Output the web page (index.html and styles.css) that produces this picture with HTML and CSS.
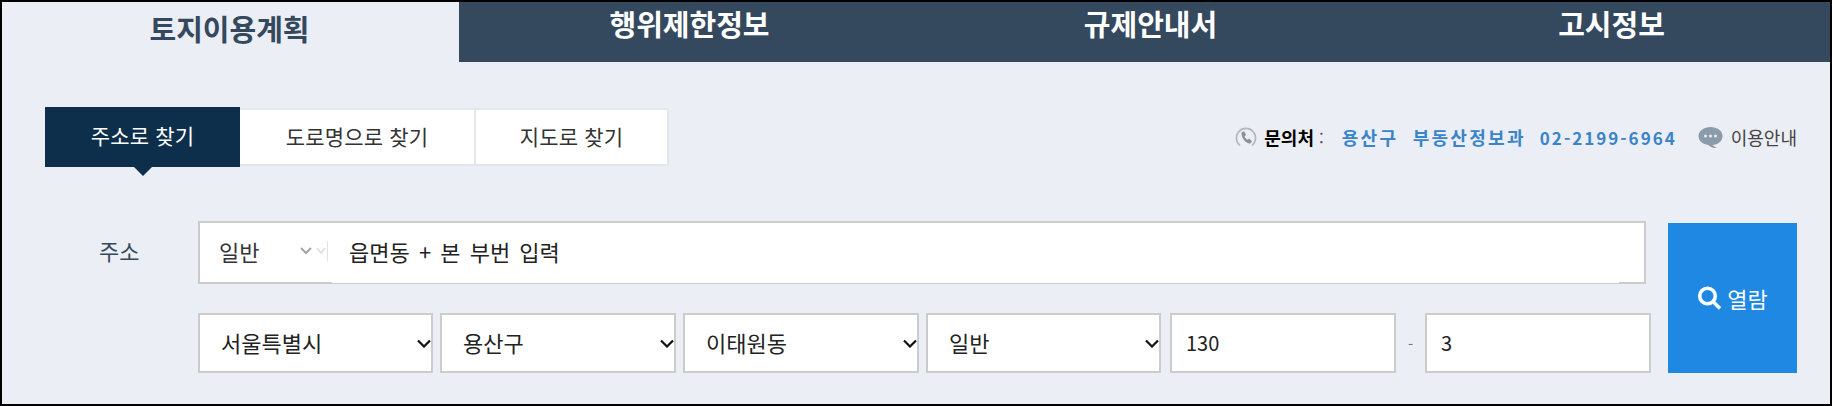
FILE: index.html
```html
<!DOCTYPE html>
<html lang="ko">
<head>
    <meta charset="UTF-8">
    <title>토지이용계획</title>
    <link rel="stylesheet" href="styles.css">
</head>
<body>
    <div class="page">
        <div class="main-tabs">
            <a class="main-tab active">토지이용계획</a>
            <a class="main-tab">행위제한정보</a>
            <a class="main-tab">규제안내서</a>
            <a class="main-tab">고시정보</a>
        </div>

        <div class="search-head">
            <div class="sub-tabs">
                <a class="sub-tab active">주소로 찾기</a>
                <a class="sub-tab road">도로명으로 찾기</a>
                <a class="sub-tab">지도로 찾기</a>
            </div>
            <div class="contact">
                <svg class="phone-icon" width="22" height="20" viewBox="0 0 22 20">
                    <path d="M5 18.5A9.6 9.6 0 1 1 17 18.5" fill="none" stroke="#b3b6ba" stroke-width="1.6"/>
                    <path d="M6.5 5.5l2.6-1.3 2 3.7-1.6 1.3c.5 1.5 1.5 2.7 3 3.5l1.6-1.2 3 3-1.8 2.1c-4.700 .2-9-5.700-8.800-11.100z" fill="#8d9196"/>
                </svg>
                <b class="contact-label">문의처</b>
                <span class="colon">:</span>
                <span class="contact-dept">용산구 부동산정보과</span>
                <span class="contact-tel">02-2199-6964</span>
                <svg class="talk-icon" width="25" height="23" viewBox="0 0 25 23">
                    <path d="M12.500 1C19 1 24.500 4.600 24.500 10S19.500 19 14.500 19c1.500 1.500 3 2.300 4.500 3-3.300 .3-6.500-.9-8.700-3.100C5 18.500 .5 15 .5 10S6 1 12.500 1z" fill="#8b9baa"/>
                    <circle cx="7.500" cy="10" r="1.500" fill="#e8ecf0"/>
                    <circle cx="12.500" cy="10" r="1.500" fill="#e8ecf0"/>
                    <circle cx="17.500" cy="10" r="1.500" fill="#e8ecf0"/>
                </svg>
                <a class="guide">이용안내</a>
            </div>
        </div>

        <div class="search-form">
            <div class="fields">
                <div class="addr-row">
                    <label class="addr-label">주소</label>
                    <div class="addr-box">
                        <select class="addr-type">
                            <option>일반</option>
                        </select>
                        <svg class="addr-arrows" width="28" height="22" viewBox="0 0 28 22">
                            <path d="M1 7l5 5 5-5" fill="none" stroke="#a6a6a6" stroke-width="2"/>
                            <path d="M17 7l4 5 4-5" fill="none" stroke="#dcdcdc" stroke-width="1.500"/>
                            <path d="M27.500 0v20" fill="none" stroke="#e2e2e2"/>
                        </svg>
                        <input class="addr-input" type="text" value="읍면동 + 본 부번 입력">
                    </div>
                </div>
                <div class="parcel-row">
                    <select class="parcel-select"><option>서울특별시</option></select>
                    <select class="parcel-select wide"><option>용산구</option></select>
                    <select class="parcel-select wide"><option>이태원동</option></select>
                    <select class="parcel-select"><option>일반</option></select>
                    <input class="parcel-num first" type="text" value="130">
                    <span class="dash">-</span>
                    <input class="parcel-num" type="text" value="3">
                </div>
            </div>
            <button class="view-button">
                <svg width="25" height="24" viewBox="0 0 25 24">
                    <circle cx="10.500" cy="10" r="7.800" fill="none" stroke="#fff" stroke-width="3.600"/>
                    <path d="M16.500 16l6.500 6.500" stroke="#fff" stroke-width="3.600"/>
                </svg>
                <span>열람</span>
            </button>
        </div>
    </div>
</body>
</html>
```

FILE: styles.css
```css
* {
    box-sizing: border-box;
}

body {
    margin: 0;
    font-family: "Noto Sans CJK KR", "Noto Sans", sans-serif;
}

.page {
    width: 1832px;
    height: 406px;
    border: 2px solid #000;
    background: #ebeef4;
    overflow: hidden;
}

.main-tabs {
    display: flex;
    height: 60px;
}

.main-tab {
    flex: none;
    width: 461px;
    background: #34495e;
    color: #fff;
    font-size: 29px;
    font-weight: bold;
    line-height: 42px;
    text-align: center;
}

.main-tab.active {
    width: 457px;
    padding-right: 2px;
    background: transparent;
    color: #34495e;
    line-height: 52px;
}

.search-head {
    display: flex;
    justify-content: space-between;
    align-items: center;
    height: 60px;
    margin-top: 45px;
    padding: 0 33px 0 43px;
}

.sub-tabs {
    display: flex;
    align-items: flex-start;
}

.sub-tab {
    width: 195px;
    height: 58px;
    margin-top: 1px;
    border: 2px solid #e3e6ea;
    background: #fff;
    color: #333;
    font-size: 21px;
    letter-spacing: .2px;
    line-height: 52px;
    text-align: center;
}

.sub-tab.road {
    width: 234px;
    border-left: 0;
    border-right: 0;
}

.sub-tab.active {
    position: relative;
    height: 60px;
    margin-top: 0;
    border: 0;
    background: #0e2f4b;
    color: #fff;
    line-height: 57px;
}

.sub-tab.active::after {
    content: "";
    position: absolute;
    left: 89px;
    top: 60px;
    border: 9px solid transparent;
    border-top-color: #0e2f4b;
    border-bottom: 0;
}

.contact {
    display: flex;
    align-items: center;
    height: 30px;
    font-size: 17px;
    white-space: nowrap;
}

.phone-icon {
    margin-right: 7px;
}

.contact-label {
    color: #000;
    font-size: 18px;
}

.colon {
    margin: 0 18px 0 5px;
    color: #555;
}

.contact-dept,
.contact-tel {
    color: #3a84c9;
    font-weight: bold;
    letter-spacing: 2px;
}

.contact-dept {
    margin-right: 14px;
    font-size: 18px;
    letter-spacing: 2.3px;
    word-spacing: 7px;
}

.contact-tel {
    margin-right: 21px;
}

.talk-icon {
    margin-right: 8px;
}

.guide {
    color: #444;
    font-size: 18px;
}

.search-form {
    display: flex;
    gap: 17px;
    margin-top: 54px;
    padding-left: 43px;
}

.fields {
    width: 1606px;
}

.addr-row {
    display: flex;
    align-items: center;
    height: 63px;
}

.addr-label {
    width: 153px;
    padding: 0 0 6px 54px;
    color: #34495e;
    font-size: 22px;
}

.addr-box {
    display: flex;
    align-items: center;
    width: 1448px;
    height: 63px;
    border: 2px solid #ccc;
    background: #fff;
}

.addr-type {
    appearance: none;
    width: 100px;
    height: 100%;
    padding: 0 0 4px 19px;
    border: 0;
    background: transparent;
    color: #333;
    font-family: inherit;
    font-size: 22px;
}

.addr-arrows {
    flex: none;
    margin: 0 4px 2px 0;
}

.addr-input {
    flex: 1;
    align-self: stretch;
    margin: 0 25px -1px 0;
    padding: 0 0 4px 17px;
    border: 0;
    outline: 0;
    background: #fff;
    color: #222;
    font-family: inherit;
    font-size: 22px;
    word-spacing: 3px;
}

.parcel-row {
    display: flex;
    align-items: center;
    gap: 7px;
    height: 60px;
    margin: 29px 0 0 153px;
}

.parcel-select {
    appearance: none;
    width: 235px;
    height: 60px;
    padding: 0 0 2px 21px;
    border: 2px solid #ccc;
    border-radius: 0;
    background: #fff url('data:image/svg+xml,<svg xmlns="http://www.w3.org/2000/svg" width="14" height="9"><path d="M1 1.500l6 6 6-6" fill="none" stroke="%23111" stroke-width="2.200"/></svg>') no-repeat right 0 center;
    color: #222;
    font-family: inherit;
    font-size: 22px;
}

.parcel-select.wide {
    width: 236px;
}

.parcel-num {
    width: 226px;
    height: 60px;
    padding: 0 14px 2px;
    border: 2px solid #ccc;
    background: #fff;
    color: #222;
    font-family: inherit;
    font-size: 20px;
}

.parcel-num.first {
    margin-left: 2px;
}

.dash {
    width: 15px;
    color: #777;
    font-size: 15px;
    text-align: center;
}

.view-button {
    display: flex;
    justify-content: center;
    align-items: center;
    gap: 5px;
    width: 129px;
    height: 150px;
    margin-top: 2px;
    border: 0;
    background: #1e88e3;
    color: #fff;
    font-family: inherit;
    font-size: 22px;
}
```
